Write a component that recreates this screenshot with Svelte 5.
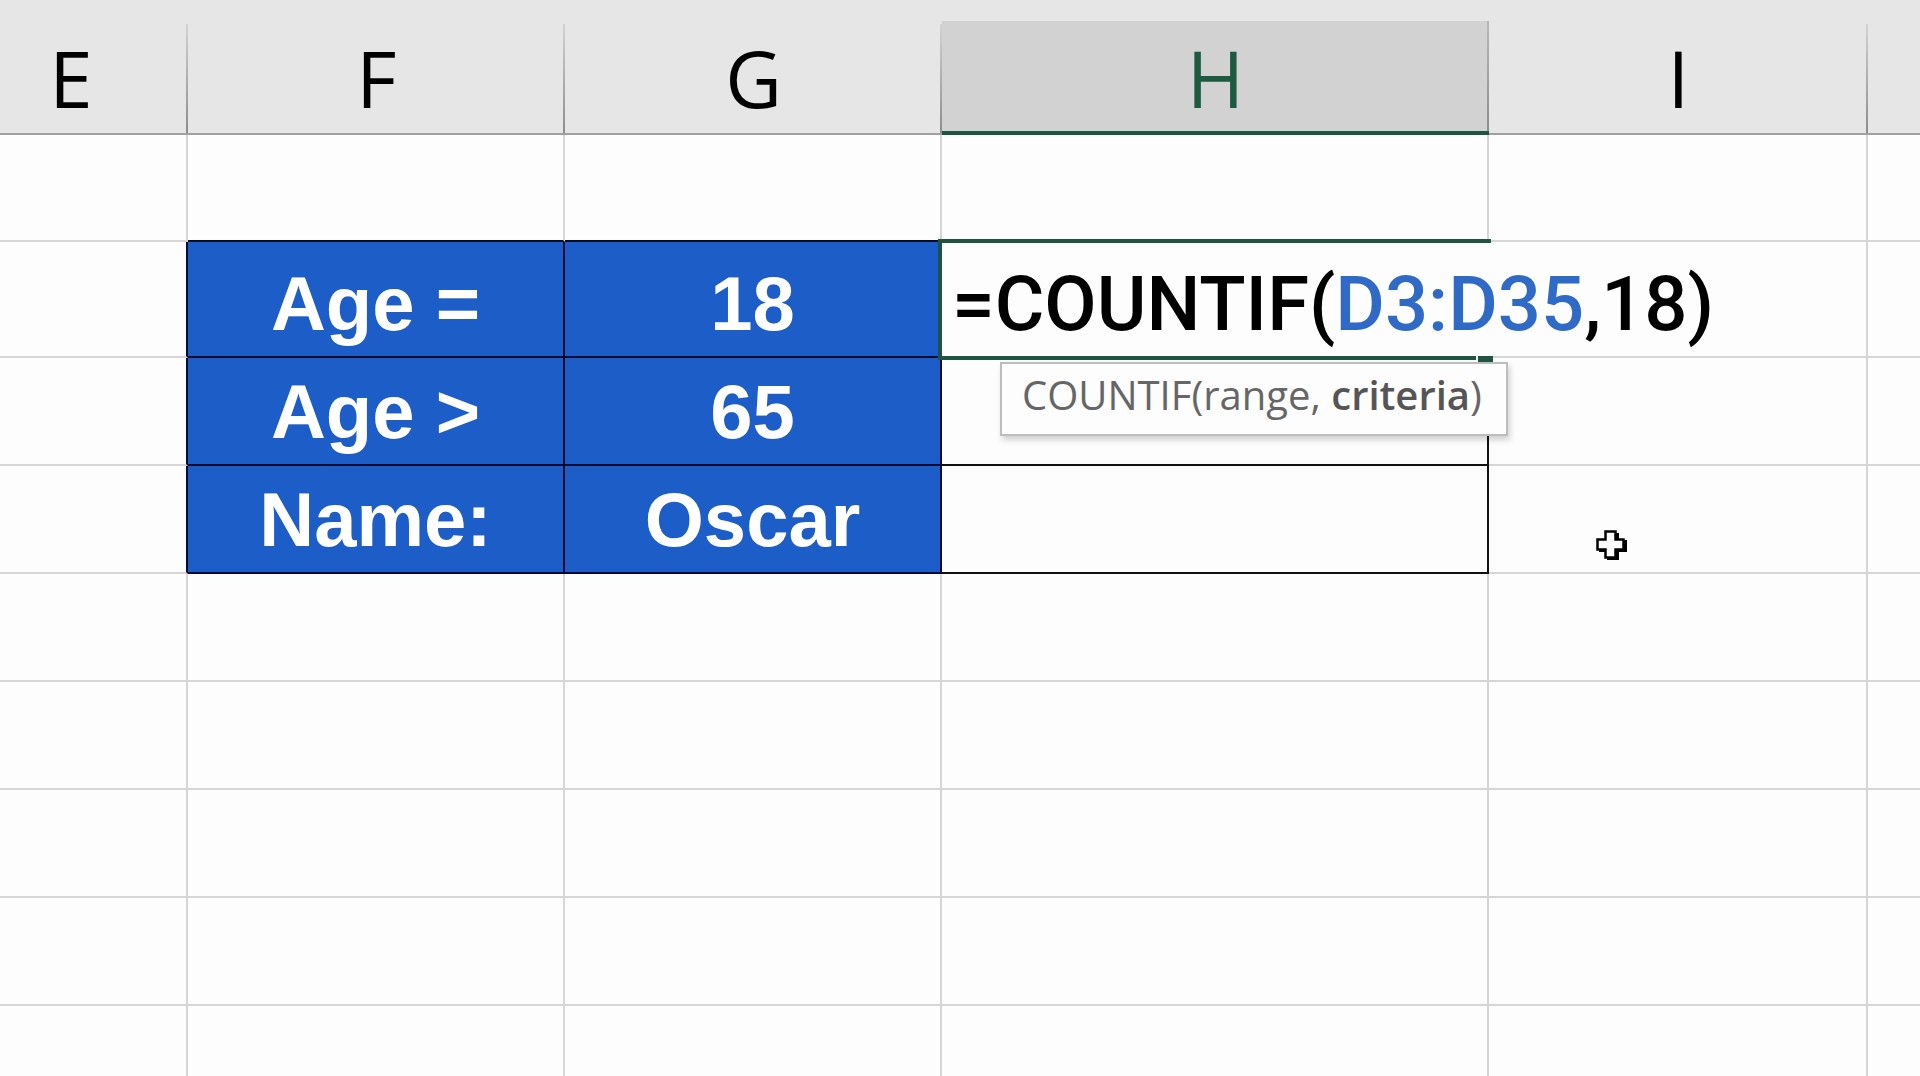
<script>
  const columns = ["E", "F", "G", "H", "I", "J"];
  const activeColumn = "H";

  // Rows that hold the criteria table, blank rows follow below
  const criteria = [
    { label: "Age =", value: "18", active: true },
    { label: "Age >", value: "65", active: false },
    { label: "Name:", value: "Oscar", active: false },
  ];
  const blankRows = [1, 2, 3, 4, 5];
</script>

<main class="sheet">
  <table>
    <colgroup>
      <col class="col-e" />
      <col class="col-f" />
      <col class="col-g" />
      <col class="col-h" />
      <col class="col-i" />
      <col />
    </colgroup>
    <thead>
      <tr>
        {#each columns as column}
          <th scope="col" class:active={column === activeColumn}>
            {column === "J" ? "" : column}
          </th>
        {/each}
      </tr>
    </thead>
    <tbody>
      <tr class="above">
        <td></td>
        <td class="boxed"></td>
        <td class="boxed"></td>
        <td></td>
        <td></td>
        <td></td>
      </tr>
      {#each criteria as row}
        <tr class:editing={row.active}>
          <td class="edge"></td>
          <td class="filled">{row.label}</td>
          <td class="filled">{row.value}</td>
          <td class="result">
            {#if row.active}
              <div class="selection"></div>
              <div class="editor" role="textbox" tabindex="0" aria-label="Formula">
                =COUNTIF(<span class="range">D3:D35</span>,18)
              </div>
              <div class="handle"></div>
              <div class="tooltip" role="tooltip">COUNTIF(range, <strong>criteria</strong>)</div>
            {/if}
          </td>
          <td></td>
          <td></td>
        </tr>
      {/each}
      {#each blankRows as row (row)}
        <tr>
          {#each columns as column (column)}
            <td></td>
          {/each}
        </tr>
      {/each}
    </tbody>
  </table>

  <svg class="cursor" viewBox="0 0 32 32" aria-hidden="true">
    <path d="M12 4h12v7h8v12h-8v8H12v-8H4V11h8z" fill="#000" />
    <path d="M10.5 2.5h10v8h8v10h-8v8h-10v-8h-8v-10h8z" fill="#fff" stroke="#000" stroke-width="2.5" />
  </svg>
</main>

<style>
  :global(body) {
    margin: 0;
    background: #fdfdfd;
  }
  .sheet {
    position: relative;
    height: 100vh;
    overflow: hidden;
    background: #fdfdfd;
  }
  /* column E is partly scrolled out of view */
  table {
    width: calc(100% + 46px);
    margin-left: -46px;
    table-layout: fixed;
    border-collapse: separate;
    border-spacing: 0;
  }
  .col-e {
    width: 234px;
  }
  .col-f,
  .col-g {
    width: 377px;
  }
  .col-h {
    width: 547px;
  }
  .col-i {
    width: 379px;
  }
  thead tr {
    background: #e6e6e6;
  }
  th {
    box-sizing: border-box;
    height: 135px;
    padding: 25px 0 0;
    border-bottom: 2px solid #a0a0a0;
    background: linear-gradient(#d2d2d2, #8c8c8c) right bottom / 2px 109px no-repeat;
    color: #000;
    font: 400 78px/106px "Open Sans", "Noto Sans", sans-serif;
    text-align: center;
    vertical-align: top;
  }
  th.active {
    border-bottom: 4px solid #1f5540;
    background:
      linear-gradient(#b8b8b8, #8c8c8c) right bottom / 2px 110px no-repeat,
      linear-gradient(#d2d2d2, #d2d2d2) right bottom / 100% 110px no-repeat;
    color: #1e5a40;
  }
  td {
    position: relative;
    box-sizing: border-box;
    height: 108px;
    padding: 0 0 6px;
    border-right: 2px solid #d6d6d6;
    border-bottom: 2px solid #d6d6d6;
    font: 700 76px/92px "Liberation Sans", Arial, sans-serif;
    text-align: center;
    vertical-align: bottom;
  }
  th:last-child {
    background: none;
  }
  td:last-child {
    border-right: 0;
  }
  .above td {
    height: 107px;
  }
  .editing td {
    height: 116px;
  }
  .boxed {
    border-bottom-color: #020a30;
  }
  .edge {
    border-right-color: #020a30;
  }
  .filled {
    border-color: #020a30;
    background: #1d5dc8;
    color: #fff;
  }
  .result {
    border-color: #111;
  }
  .selection {
    position: absolute;
    inset: -3px -4px -4px -4px;
    z-index: 2;
    border: 4px solid #1f5540;
    border-right: 0;
  }
  .editor {
    position: absolute;
    top: 1px;
    bottom: 0;
    left: 0;
    z-index: 3;
    display: flex;
    align-items: center;
    padding: 8px 12px 0 10px;
    background: #fdfdfd;
    color: #000;
    font: 500 76px/92px Roboto, "Liberation Sans", sans-serif;
    white-space: pre;
    outline: none;
  }
  .range {
    color: #2f6ac6;
  }
  .handle {
    position: absolute;
    right: -6px;
    bottom: -6px;
    z-index: 4;
    width: 15px;
    height: 6px;
    background: #1f5540;
    box-shadow: -2px 0 #fdfdfd;
  }
  .tooltip {
    position: absolute;
    top: 120px;
    left: 58px;
    z-index: 5;
    padding: 0 24px 8px 20px;
    border: 2px solid #bdbdbd;
    background: #fdfdfd;
    box-shadow: 2px 4px 6px rgba(0, 0, 0, 0.18);
    color: #666;
    font: 400 40px/62px "Open Sans", "Noto Sans", sans-serif;
    white-space: nowrap;
  }
  .tooltip strong {
    color: #555;
    font-weight: 600;
  }
  .cursor {
    position: absolute;
    top: 529px;
    left: 1595px;
    z-index: 6;
    width: 32px;
    height: 32px;
  }
</style>
